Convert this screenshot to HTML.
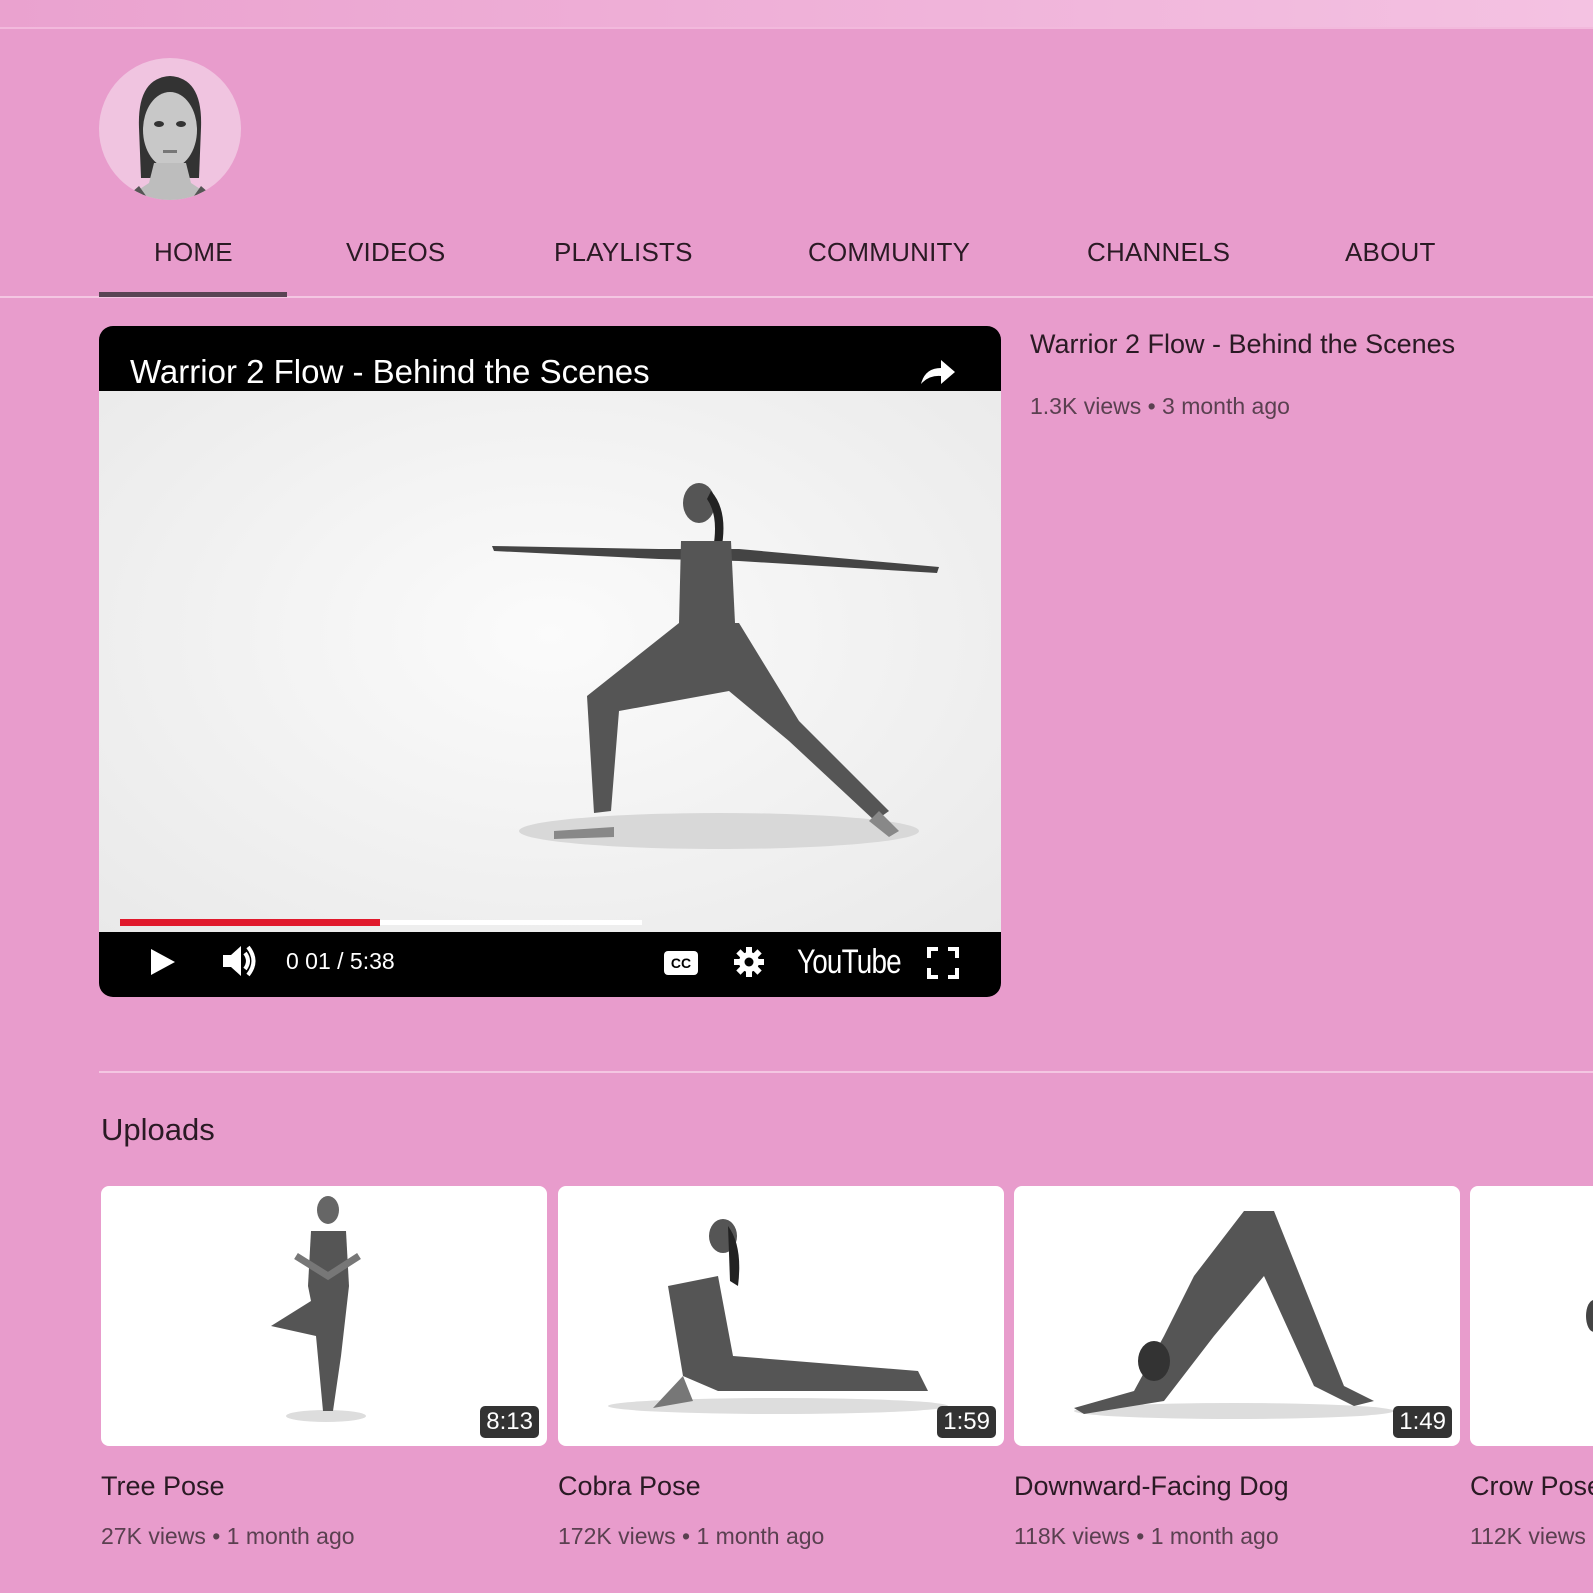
<!DOCTYPE html>
<html><head><meta charset="utf-8"><style>
*{margin:0;padding:0;box-sizing:border-box}
body{width:1593px;height:1593px;overflow:hidden;background:#e89ccc;font-family:"Liberation Sans",sans-serif;position:relative;color:#222}
.a{position:absolute}
.nav{position:absolute;top:237px;font-size:26px;color:#2a1a24;letter-spacing:0.2px}
.thumb{position:absolute;top:1186px;width:446px;height:260px;background:#fff;border-radius:8px;overflow:hidden}
.dur{position:absolute;right:8px;bottom:8px;background:#333;color:#fff;font-size:24px;padding:2px 6px;border-radius:5px}
.tt{position:absolute;top:1471px;font-size:27px;color:#2a1a24;white-space:nowrap}
.vv{position:absolute;top:1523px;font-size:23px;color:#5a4050;white-space:nowrap}
</style></head><body>
<div class="a" style="left:0;top:0;width:1593px;height:27px;background:linear-gradient(90deg,#eaa2cf,#f0b4da 60%,#f4c2e2)"></div>
<div class="a" style="left:0;top:27px;width:1593px;height:2px;background:#f2b9dc"></div>
<div class="a" style="left:99px;top:58px;width:142px;height:142px;border-radius:50%;background:#f0c4e0;overflow:hidden">
<svg width="142" height="142" viewBox="0 0 142 142"><path d="M40 70 Q38 20 71 18 Q104 20 102 70 L100 120 L42 120Z" fill="#333"/><ellipse cx="71" cy="72" rx="27" ry="38" fill="#c8c8c8"/><path d="M55 105 L87 105 L92 125 L118 142 L24 142 L50 125Z" fill="#bdbdbd"/><path d="M24 142 L40 128 L50 142Z M118 142 L102 128 L92 142Z" fill="#555"/><ellipse cx="60" cy="66" rx="5" ry="3" fill="#333"/><ellipse cx="82" cy="66" rx="5" ry="3" fill="#333"/><rect x="64" y="92" width="14" height="3" fill="#777"/></svg></div>
<div class="nav" style="left:154px">HOME</div>
<div class="nav" style="left:346px">VIDEOS</div>
<div class="nav" style="left:554px">PLAYLISTS</div>
<div class="nav" style="left:808px">COMMUNITY</div>
<div class="nav" style="left:1087px">CHANNELS</div>
<div class="nav" style="left:1345px">ABOUT</div>
<div class="a" style="left:0;top:296px;width:1593px;height:2px;background:#f4c6e2"></div>
<div class="a" style="left:99px;top:292px;width:188px;height:5px;background:#5a4454"></div>

<div class="a" style="left:99px;top:326px;width:902px;height:671px;background:#000;border-radius:14px;overflow:hidden">
<div class="a" style="left:31px;top:27px;font-size:33px;color:#fff">Warrior 2 Flow - Behind the Scenes</div>
<svg class="a" style="left:818px;top:30px" width="40" height="32" viewBox="0 0 40 32"><path d="M4 28 Q8 12 24 12 L24 4 L38 16 L24 28 L24 20 Q12 19 4 28Z" fill="#fff"/></svg>
<div class="a" style="left:0;top:65px;width:902px;height:541px;background:radial-gradient(ellipse at 50% 45%,#fbfbfb,#e9e9e9)">
<svg width="902" height="541" viewBox="0 0 902 541">
<ellipse cx="620" cy="440" rx="200" ry="18" fill="#d8d8d8"/>
<path d="M393 155 L560 158 L640 158 L840 176 L838 182 L640 170 L560 168 L395 160Z" fill="#444"/>
<ellipse cx="600" cy="112" rx="16" ry="20" fill="#555"/><path d="M612 100 Q630 120 622 160 L614 158 Q620 125 608 108Z" fill="#222"/>
<path d="M582 150 L632 150 L636 232 L580 232Z" fill="#555"/>
<path d="M580 232 L640 232 L700 330 L790 420 L776 430 L690 350 L630 300 L520 320 L512 420 L495 422 L488 305Z" fill="#555"/>
<path d="M455 440 L515 436 L515 446 L455 448Z M780 420 L800 440 L790 446 L770 430Z" fill="#888"/>
</svg>
<div class="a" style="left:21px;top:529px;width:522px;height:5px;background:#fff"></div>
<div class="a" style="left:21px;top:528px;width:260px;height:7px;background:#e0192c"></div>
</div>
<svg class="a" style="left:50px;top:621px" width="28" height="30"><path d="M2 2 L26 15 L2 28Z" fill="#fff"/></svg>
<svg class="a" style="left:122px;top:617px" width="38" height="36" viewBox="0 0 38 36"><path d="M2 12 H10 L20 3 V33 L10 24 H2Z" fill="#fff"/><path d="M24 10 Q30 18 24 26 M27 4 Q38 18 27 32" stroke="#fff" stroke-width="4" fill="none"/></svg>
<div class="a" style="left:187px;top:622px;font-size:23px;color:#fff">0 01 / 5:38</div>
<div class="a" style="left:565px;top:625px;width:34px;height:24px;background:#fff;border-radius:4px;font-size:14px;font-weight:bold;color:#000;text-align:center;line-height:24px">CC</div>
<svg class="a" style="left:634px;top:620px" width="32" height="32" viewBox="0 0 32 32"><g fill="#fff"><circle cx="16" cy="16" r="10"/><rect x="13" y="1" width="6" height="30"/><rect x="1" y="13" width="30" height="6"/><rect x="13" y="1" width="6" height="30" transform="rotate(45 16 16)"/><rect x="13" y="1" width="6" height="30" transform="rotate(-45 16 16)"/></g><circle cx="16" cy="16" r="4.5" fill="#000"/></svg>
<div class="a" style="left:698px;top:617px;font-size:34px;color:#fff;transform:scaleX(.82);transform-origin:left;letter-spacing:-1px">YouTube</div>
<svg class="a" style="left:828px;top:621px" width="32" height="32" viewBox="0 0 32 32"><path d="M2 11V2H11 M21 2H30V11 M30 21V30H21 M11 30H2V21" stroke="#fff" stroke-width="4" fill="none"/></svg>
</div>

<div class="a" style="left:1030px;top:329px;font-size:27px;color:#2a1a24">Warrior 2 Flow - Behind the Scenes</div>
<div class="a" style="left:1030px;top:393px;font-size:23px;color:#5a4050">1.3K views • 3 month ago</div>

<div class="a" style="left:99px;top:1071px;width:1494px;height:2px;background:#f4c6e2"></div>
<div class="a" style="left:101px;top:1112px;font-size:31px;color:#2a1a24">Uploads</div>

<div class="thumb" style="left:101px"><svg width="446" height="260"><ellipse cx="225" cy="230" rx="40" ry="6" fill="#ddd"/><ellipse cx="227" cy="24" rx="11" ry="14" fill="#666"/><path d="M210 45 L245 45 L248 100 L207 100Z" fill="#555"/><path d="M207 100 L248 100 L240 170 L232 225 L222 225 L215 150 L170 140 L210 115Z" fill="#555"/><path d="M195 70 L227 90 L258 70" stroke="#777" stroke-width="7" fill="none"/></svg><div class="dur">8:13</div></div>
<div class="thumb" style="left:558px"><svg width="446" height="260"><ellipse cx="220" cy="220" rx="170" ry="8" fill="#ddd"/><ellipse cx="165" cy="50" rx="14" ry="17" fill="#555"/><path d="M170 40 Q185 60 180 100 L172 95Z" fill="#222"/><path d="M110 100 L160 90 L175 170 L360 185 L370 205 L160 205 L125 190Z" fill="#555"/><path d="M125 190 L135 215 L95 222 Z" fill="#777"/></svg><div class="dur">1:59</div></div>
<div class="thumb" style="left:1014px"><svg width="446" height="260"><ellipse cx="220" cy="225" rx="160" ry="8" fill="#ddd"/><path d="M230 25 L260 25 L330 200 L360 215 L340 220 L300 200 L250 90 L200 150 L150 215 L70 228 L60 222 L120 205 L150 150 L180 90Z" fill="#555"/><ellipse cx="140" cy="175" rx="16" ry="20" fill="#333"/></svg><div class="dur">1:49</div></div>
<div class="thumb" style="left:1470px"><svg width="446" height="260"><ellipse cx="124" cy="130" rx="8" ry="16" fill="#444"/></svg></div>

<div class="tt" style="left:101px">Tree Pose</div>
<div class="tt" style="left:558px">Cobra Pose</div>
<div class="tt" style="left:1014px">Downward-Facing Dog</div>
<div class="tt" style="left:1470px">Crow Pose</div>
<div class="vv" style="left:101px">27K views • 1 month ago</div>
<div class="vv" style="left:558px">172K views • 1 month ago</div>
<div class="vv" style="left:1014px">118K views • 1 month ago</div>
<div class="vv" style="left:1470px">112K views</div>
</body></html>
